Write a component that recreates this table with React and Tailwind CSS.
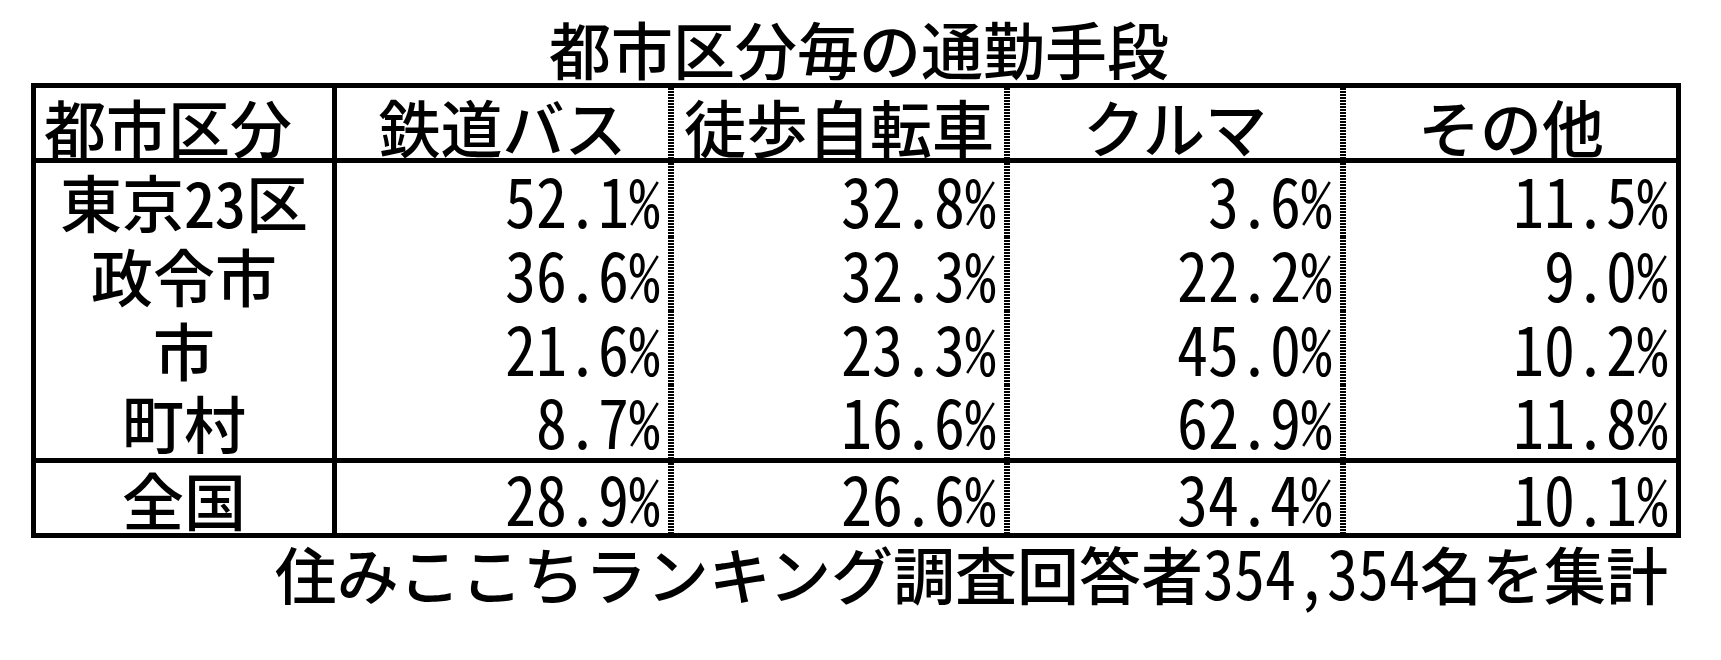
const rows = [
  { name: '東京23区', v: ['52.1%', '32.8%', '3.6%', '11.5%'] },
  { name: '政令市', v: ['36.6%', '32.3%', '22.2%', '9.0%'] },
  { name: '市', v: ['21.6%', '23.3%', '45.0%', '10.2%'] },
  { name: '町村', v: ['8.7%', '16.6%', '62.9%', '11.8%'] },
];

const total = { name: '全国', v: ['28.9%', '26.6%', '34.4%', '10.1%'] };

const heads = ['鉄道バス', '徒歩自転車', 'クルマ', 'その他'];
const widths = ['w-[331px]', 'w-[330px]', 'w-[330px]', 'w-[330px]'];

function Dotted() {
  return (
    <div className="w-[6px] shrink-0 bg-[repeating-linear-gradient(to_bottom,#000_0_2px,transparent_2px_3px)]" />
  );
}

function Row({ row, height, pb }) {
  return (
    <div className={`flex ${height}`}>
      <div className={`w-[296px] shrink-0 flex items-end justify-center ${pb}`}>
        <span className="inline-block leading-none">{row.name}</span>
      </div>
      <div className="w-[5px] shrink-0 bg-black" />
      {row.v.map((val, i) => (
        <div key={i} className="contents">
          {i > 0 && <Dotted />}
          <div className={`${widths[i]} shrink-0 flex items-end justify-end pr-[8px] ${pb}`}>
            <span className="inline-block leading-none font-normal origin-bottom scale-y-[1.1]">{val}</span>
          </div>
        </div>
      ))}
    </div>
  );
}

export default function App() {
  return (
    <div className="w-[1721px] h-[660px] bg-white text-black text-[62px] font-medium font-['Noto_Sans_CJK_JP',sans-serif] [font-feature-settings:'hwid']">
      <div className="pt-[17px] pl-[31px]">
        <div className="w-[1650px]">
          <h1 className="h-[62px] leading-none text-center pl-[6px] font-medium">都市区分毎の通勤手段</h1>

          <div className="mt-[4px] border-[5px] border-black">
            <div className="flex h-[70px] border-b-[5px] border-black box-content">
              <div className="w-[296px] shrink-0 flex items-end pl-[8px] pb-[1px]">
                <span className="inline-block leading-none">都市区分</span>
              </div>
              <div className="w-[5px] shrink-0 bg-black" />
              {heads.map((h, i) => (
                <div key={h} className="contents">
                  {i > 0 && <Dotted />}
                  <div className={`${widths[i]} shrink-0 flex items-end justify-center pb-[1px]`}>
                    <span className="inline-block leading-none">{h}</span>
                  </div>
                </div>
              ))}
            </div>

            {rows.map((r, i) => (
              <Row key={r.name} row={r} height={i === 3 ? 'h-[73px]' : 'h-[74px]'} pb="pb-[5px]" />
            ))}

            <div className="border-t-[5px] border-black">
              <Row row={total} height="h-[70px]" pb="pb-[3px]" />
            </div>
          </div>

          <p className="mt-[4px] leading-none text-right pr-[13px]">
            住みここちランキング調査回答者
            <span className="inline-block font-normal origin-bottom scale-y-[1.1]">354,354</span>
            名を集計
          </p>
        </div>
      </div>
    </div>
  );
}
